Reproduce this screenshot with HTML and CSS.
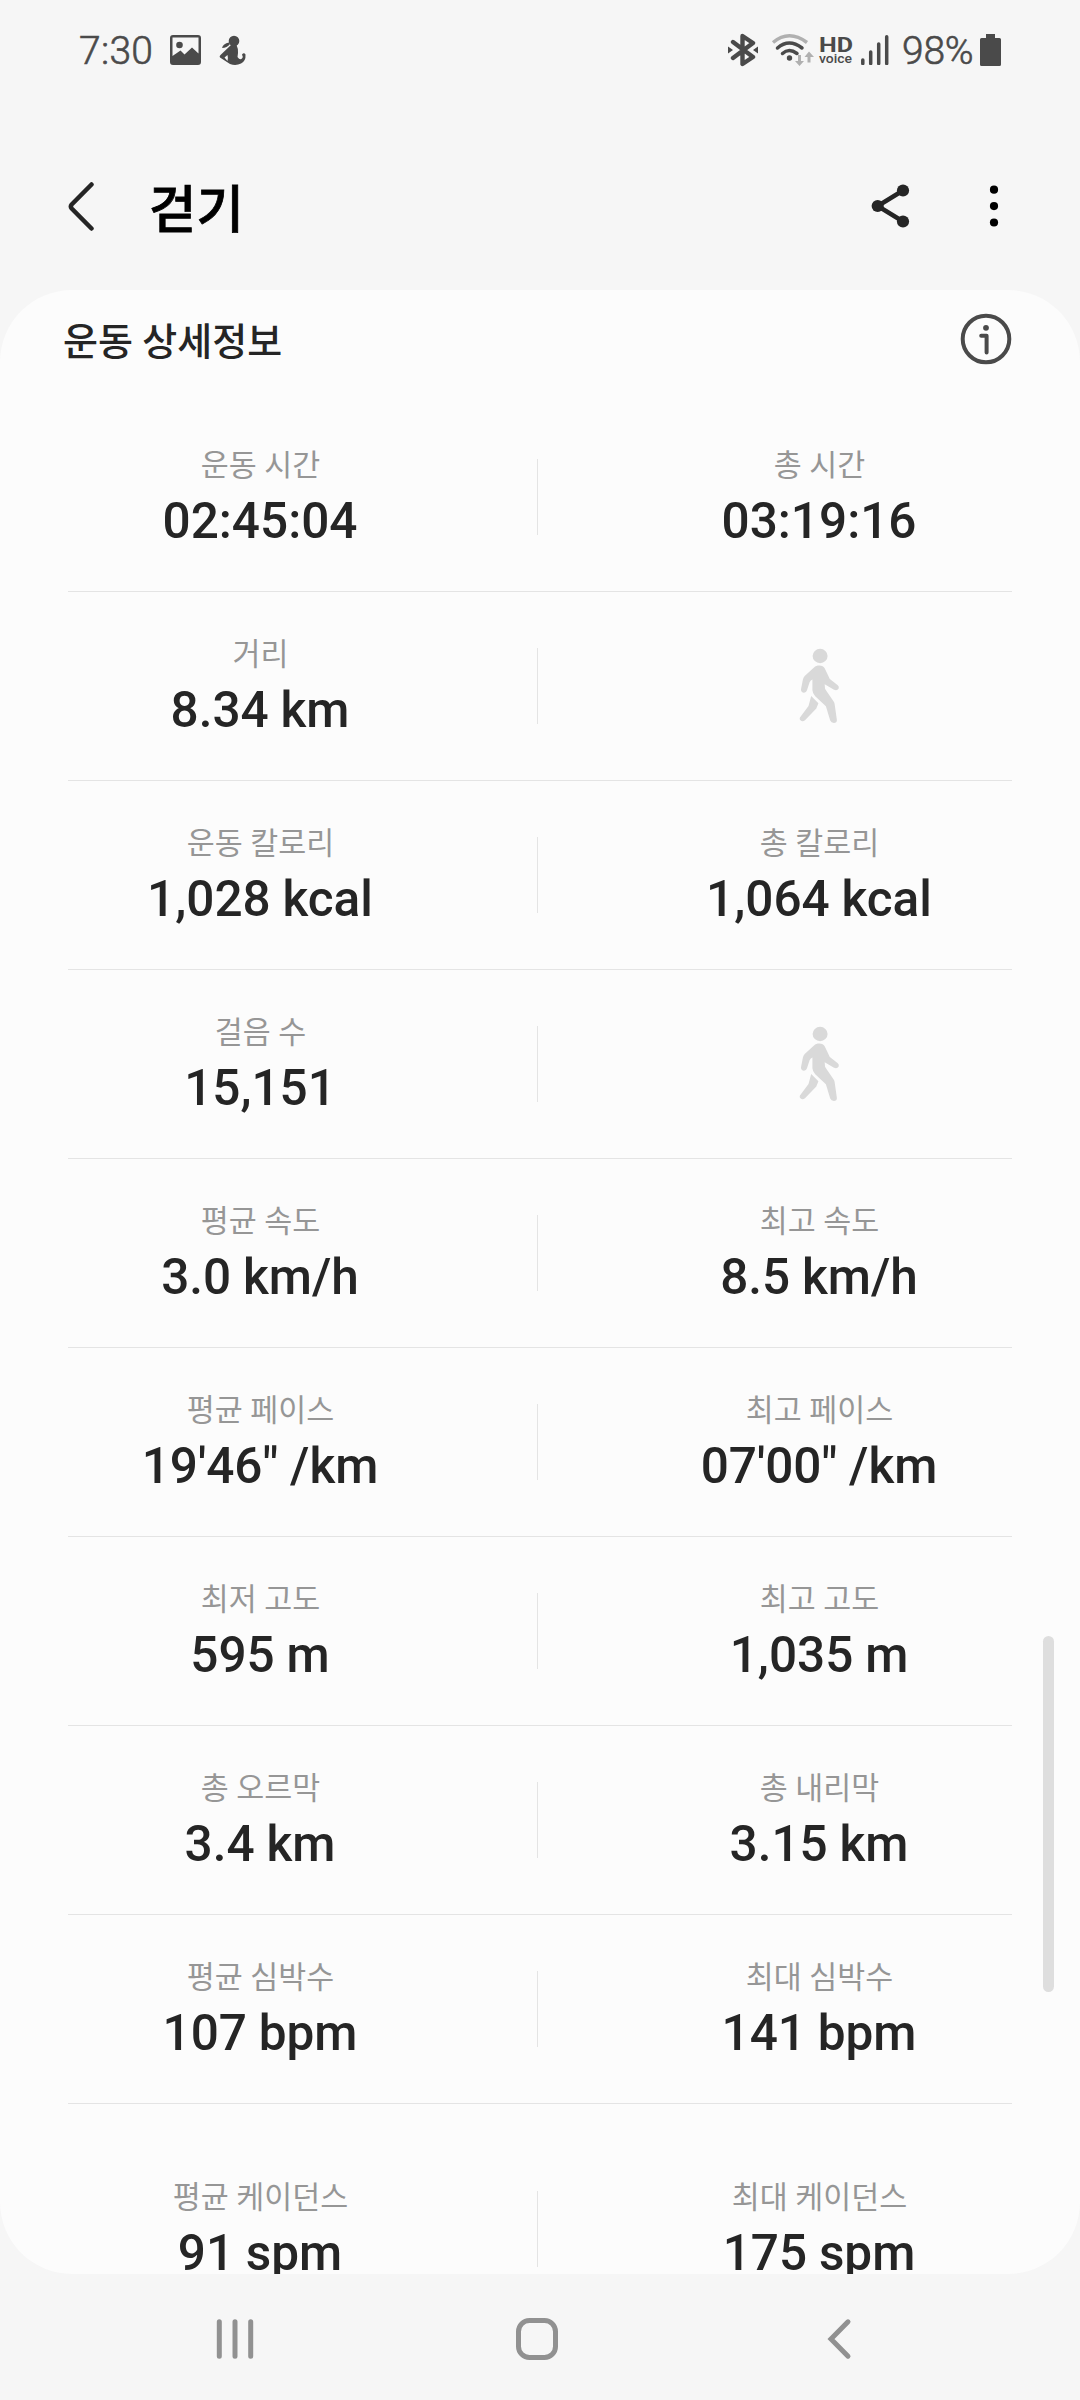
FILE: index.html
```html
<!DOCTYPE html>
<html lang="ko">
<head>
<meta charset="UTF-8">
<meta name="viewport" content="width=device-width, initial-scale=1.0">
<title>걷기</title>
<link rel="stylesheet" href="styles.css">
</head>
<body>
    <svg class="defs" width="0" height="0">
        <symbol id="walk" viewBox="0 0 42 76">
            <ellipse cx="21.1" cy="8" rx="7.5" ry="7.2"/>
            <path d="M20.3 17.6C18 17.6 16.5 18.2 15 19.4L5.7 28Q4.2 29.5 3.9 31.5L2 41.3C1.6 43.3 3.5 44.8 5.1 44.7Q7.2 44.6 7.9 42.5L10.6 34.3Q11.6 32 13.4 31.5V42.3Q13.6 45.5 16.2 48.3L26.9 58.3L31.2 72.6Q32.2 75 34.8 75Q38 75 37.9 72L35.7 56.5Q35.6 55 34.8 53.8L28 43.7Q26.3 41.5 26 40.5L25.7 36.3L35 41.7Q38 43 39.6 40.7Q40.6 38.7 38.5 37L30.8 31L25.8 20.5Q24.3 17.6 20.3 17.6Z"/>
            <path d="M12.2 48L19.4 55.3L17.3 60.5L6 72.2Q3.5 74.3 1.4 72.2Q-.2 70.2 1.7 68.4L9.5 58Z"/>
        </symbol>
    </svg>

    <div class="status-bar">
        <span class="time">7:30</span>
        <svg class="ic-photo" width="31" height="30" viewBox="0 0 31 30">
            <path fill-rule="evenodd" d="M3 0H28Q31 0 31 3V27Q31 30 28 30H3Q0 30 0 27V3Q0 0 3 0ZM2.5 2.5V21L10.5 15.5L14.5 19.5L22 12.5L28.5 18.5V2.5Z"/>
            <circle cx="9.5" cy="10" r="3.3"/>
        </svg>
        <svg class="ic-person" width="28" height="31" viewBox="0 0 28 31">
            <circle cx="15" cy="6" r="5.3"/>
            <path d="M10 7.5Q4 8.5 3 13Q8 13 11 9Z"/>
            <path fill-rule="evenodd" d="M12 10H17.5Q19.5 14 19 18L18.5 22Q21 25.5 23 23.5Q24.5 22 23 19.5Q25 17 26.5 19.5Q27 26 22 28.5Q17 31 11 29L1 22.5Q0 21 1.5 20ZM8.5 20L5.5 22.5L8.5 26Q9.3 23 8.5 20Z"/>
        </svg>

        <div class="status-right">
            <svg class="ic-bt" width="30" height="34" viewBox="0 0 30 34">
                <path class="line" d="M5 9L25 24L14.5 31V3L25 10L5 25"/>
                <path d="M0 13.5L5 17L0 20.5ZM30 13.5L25 17L30 20.5Z"/>
            </svg>
            <svg class="ic-wifi" width="44" height="34" viewBox="0 0 44 34">
                <path class="pale-line" d="M2 9.5Q18 -4 36 9.5"/>
                <path class="line" d="M6.5 15Q18 5 31 15M11.5 20.5Q18 14.5 26 20.5"/>
                <circle cx="18.5" cy="25" r="2.7"/>
                <path class="pale" d="M27 22H30V28H33L28.5 33L24 28H27ZM36.5 29.5V24H33.5L38 18.5L43 24H39.5V29.5Z"/>
            </svg>
            <svg class="ic-hd" width="34" height="30" viewBox="0 0 34 30">
                <text class="hd" x="0" y="16.5" textLength="34" lengthAdjust="spacingAndGlyphs">HD</text>
                <text class="voice" x="0" y="27.7" textLength="33" lengthAdjust="spacingAndGlyphs">voice</text>
            </svg>
            <svg class="ic-signal" width="28" height="30" viewBox="0 0 28 30">
                <path class="line" d="M1.8 25V28.5M9.7 17V28.5M17.7 9V28.5M25.7 1.8V28.5"/>
            </svg>
            <span class="percent">98%</span>
            <svg class="ic-battery" width="21" height="32" viewBox="0 0 21 32">
                <path d="M6 0H15V4H19.5Q21 4 21 5.5V30.5Q21 32 19.5 32H1.5Q0 32 0 30.5V5.5Q0 4 1.5 4H6Z"/>
            </svg>
        </div>
    </div>

    <header class="app-bar">
        <svg class="ic-back" width="28" height="52" viewBox="0 0 28 52">
            <path d="M23.5 4.5L3.7 24.5Q2 26.5 3.7 28.5L23.5 48.5"/>
        </svg>
        <h1>걷기</h1>
        <svg class="ic-share" width="40" height="44" viewBox="0 0 40 44">
            <path d="M32 6.5L6.7 22L32 37.5"/>
            <circle cx="6.7" cy="22" r="6.1"/>
            <circle cx="32" cy="6.5" r="6.1"/>
            <circle cx="32" cy="37.5" r="6.1"/>
        </svg>
        <svg class="ic-more" width="10" height="44" viewBox="0 0 10 44">
            <circle cx="5" cy="5.7" r="4.1"/>
            <circle cx="5" cy="22.1" r="4.1"/>
            <circle cx="5" cy="38.5" r="4.1"/>
        </svg>
    </header>

    <main class="card">
        <div class="card-head">
            <h2>운동 상세정보</h2>
            <svg class="ic-info" width="52" height="52" viewBox="0 0 52 52">
                <circle class="ring" cx="26" cy="26" r="23.3"/>
                <circle cx="26" cy="14.8" r="2.9"/>
                <path d="M21.2 22.7H26.6V39.5"/>
            </svg>
        </div>

        <div class="row">
            <div class="cell"><p class="label">운동 시간</p><p class="value">02:45:04</p></div>
            <i class="divider"></i>
            <div class="cell"><p class="label">총 시간</p><p class="value">03:19:16</p></div>
        </div>
        <div class="row">
            <div class="cell"><p class="label">거리</p><p class="value">8.34 km</p></div>
            <i class="divider"></i>
            <svg class="ic-walk" width="42" height="76"><use href="#walk"/></svg>
        </div>
        <div class="row">
            <div class="cell"><p class="label">운동 칼로리</p><p class="value">1,028 kcal</p></div>
            <i class="divider"></i>
            <div class="cell"><p class="label">총 칼로리</p><p class="value">1,064 kcal</p></div>
        </div>
        <div class="row">
            <div class="cell"><p class="label">걸음 수</p><p class="value">15,151</p></div>
            <i class="divider"></i>
            <svg class="ic-walk" width="42" height="76"><use href="#walk"/></svg>
        </div>
        <div class="row">
            <div class="cell"><p class="label">평균 속도</p><p class="value">3.0 km/h</p></div>
            <i class="divider"></i>
            <div class="cell"><p class="label">최고 속도</p><p class="value">8.5 km/h</p></div>
        </div>
        <div class="row">
            <div class="cell"><p class="label">평균 페이스</p><p class="value">19'46" /km</p></div>
            <i class="divider"></i>
            <div class="cell"><p class="label">최고 페이스</p><p class="value">07'00" /km</p></div>
        </div>
        <div class="row">
            <div class="cell"><p class="label">최저 고도</p><p class="value">595 m</p></div>
            <i class="divider"></i>
            <div class="cell"><p class="label">최고 고도</p><p class="value">1,035 m</p></div>
        </div>
        <div class="row">
            <div class="cell"><p class="label">총 오르막</p><p class="value">3.4 km</p></div>
            <i class="divider"></i>
            <div class="cell"><p class="label">총 내리막</p><p class="value">3.15 km</p></div>
        </div>
        <div class="row">
            <div class="cell"><p class="label">평균 심박수</p><p class="value">107 bpm</p></div>
            <i class="divider"></i>
            <div class="cell"><p class="label">최대 심박수</p><p class="value">141 bpm</p></div>
        </div>
        <div class="row last">
            <div class="cell"><p class="label">평균 케이던스</p><p class="value">91 spm</p></div>
            <i class="divider"></i>
            <div class="cell"><p class="label">최대 케이던스</p><p class="value">175 spm</p></div>
        </div>

        <div class="scrollbar"></div>
    </main>

    <nav class="nav-bar">
        <svg width="42" height="44" viewBox="0 0 42 44"><path d="M5.3 4.8V39.2M21 4.8V39.2M36.7 4.8V39.2"/></svg>
        <svg width="42" height="44" viewBox="0 0 42 44"><rect x="2.5" y="3.5" width="37" height="37" rx="11"/></svg>
        <svg width="42" height="44" viewBox="0 0 42 44"><path d="M30 4.8L13 22L30 39.2"/></svg>
    </nav>
</body>
</html>
```
FILE: styles.css
```css
* {
    box-sizing: border-box;
    margin: 0;
    padding: 0;
}
body {
    width: 1080px;
    height: 2400px;
    overflow: hidden;
    display: flex;
    flex-direction: column;
    background-color: #f6f6f6;
    color: #252525;
    font-family: Roboto, "Noto Sans CJK KR", sans-serif;
}
svg {
    display: block;
    flex-shrink: 0;
}
.defs {
    position: absolute;
}

/* status bar */
.status-bar {
    height: 122px;
    padding: 0 79px 22px;
    display: flex;
    align-items: center;
    color: #4a4a4a;
    fill: #4a4a4a;
    font-size: 39px;
    line-height: 46px;
}
.time,
.percent {
    padding-top: 2px;
    font-weight: 300;
    -webkit-text-stroke: 0.6px #4a4a4a;
}
.time {
    width: 91px;
    letter-spacing: 0.3px;
}
.ic-person {
    margin-left: 18px;
}
.status-right {
    display: flex;
    align-items: center;
    margin-left: auto;
}
.status-bar .line {
    fill: none;
    stroke: #4a4a4a;
    stroke-width: 3.5;
    stroke-linecap: round;
    stroke-linejoin: round;
}
.status-bar .ic-bt .line {
    stroke-width: 4.4;
}
.pale {
    fill: #b0b0b0;
}
.pale-line {
    fill: none;
    stroke: #b0b0b0;
    stroke-width: 3.5;
}
.ic-wifi {
    margin-left: 13px;
}
.ic-hd {
    margin-left: 4px;
    overflow: visible;
}
.hd {
    font-size: 20px;
    font-weight: 700;
}
.voice {
    font-size: 13px;
    font-weight: 500;
}
.ic-signal {
    margin-left: 8px;
}
.percent {
    width: 71px;
    margin-left: 13px;
    letter-spacing: -0.2px;
}
.ic-battery {
    margin-left: 7px;
}

/* app bar */
.app-bar {
    height: 168px;
    padding: 0 81px 0 68px;
    display: flex;
    align-items: center;
}
.ic-back {
    fill: none;
    stroke: #252525;
    stroke-width: 4.5;
    stroke-linecap: round;
}
h1 {
    margin-left: 53px;
    padding-top: 9px;
    color: #000;
    font-size: 51.5px;
    font-weight: 500;
    line-height: 74px;
    -webkit-text-stroke: 0.8px #000;
}
.ic-share {
    margin-left: auto;
    fill: #252525;
}
.ic-share path {
    fill: none;
    stroke: #252525;
    stroke-width: 4.5;
}
.ic-more {
    margin-left: 78px;
    fill: #000;
}

/* workout details */
.card {
    position: relative;
    height: 1984px;
    padding: 0 68px;
    overflow: hidden;
    border-radius: 72px;
    background-color: #fcfcfc;
}
.card-head {
    height: 98px;
    margin: 0 0 15px -5px;
    display: flex;
    align-items: center;
    justify-content: space-between;
}
h2 {
    padding-top: 5px;
    font-size: 38px;
    font-weight: 500;
    line-height: 56px;
}
.ic-info {
    fill: #4a4a4a;
}
.ic-info .ring,
.ic-info path {
    fill: none;
    stroke: #4a4a4a;
    stroke-width: 4;
    stroke-linecap: round;
    stroke-linejoin: round;
}
.row {
    height: 189px;
    display: grid;
    grid-template-columns: 385px 1fr 385px;
    border-bottom: 1px solid #e4e4e4;
}
.row.last {
    padding-top: 31px;
    height: 220px;
    border: none;
}
.cell {
    padding-top: 40px;
    text-align: center;
    white-space: nowrap;
}
.label {
    color: #969696;
    font-size: 30.4px;
    line-height: 45px;
}
.value {
    margin: 4px 1px 0 0;
    font-size: 49.5px;
    font-weight: 500;
    line-height: 58px;
    word-spacing: -0.5px;
}
.divider {
    width: 1px;
    height: 76px;
    margin: 56px 0 0 84px;
    background-color: #e4e4e4;
}
.ic-walk {
    margin: 56px auto 0;
    fill: #d9d9d9;
}
.scrollbar {
    position: absolute;
    top: 1346px;
    right: 26px;
    width: 11px;
    height: 356px;
    border-radius: 6px;
    background-color: #dedede;
}

/* navigation bar */
.nav-bar {
    height: 126px;
    padding: 4px 220px 0 214px;
    display: flex;
    align-items: center;
    justify-content: space-between;
}
.nav-bar svg {
    fill: none;
    stroke: #919191;
    stroke-width: 5;
    stroke-linecap: round;
}
```
